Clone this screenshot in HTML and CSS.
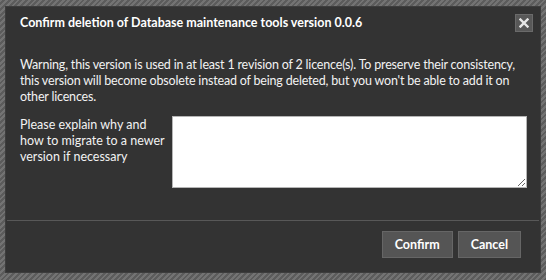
FILE: index.html
```html
<!DOCTYPE html>
<html lang="en">
<head>
    <meta charset="UTF-8">
    <title>Confirm deletion</title>
    <link rel="stylesheet" href="styles.css">
</head>
<body>
    <div class="dialog">
        <div class="dialog-header">
            <h1>Confirm deletion of Database maintenance tools version 0.0.6</h1>
            <button type="button" class="close-btn" aria-label="Close">
                <svg width="10" height="10" viewBox="0 0 10 10">
                    <path d="M1.5 1.5 L8.5 8.5 M8.5 1.5 L1.5 8.5" stroke="#e6e6e6" stroke-width="2.4" stroke-linecap="square"/>
                </svg>
            </button>
        </div>

        <div class="dialog-body">
            <p class="warning">Warning, this version is used in at least 1 revision of 2 licence(s). To preserve their consistency, this version will become obsolete instead of being deleted, but you won't be able to add it on other licences.</p>
            <div class="form-row">
                <label for="reason">Please explain why and how to migrate to a newer version if necessary</label>
                <textarea id="reason" name="reason" autofocus></textarea>
            </div>
        </div>

        <div class="dialog-footer">
            <button type="button" class="btn">Confirm</button>
            <button type="button" class="btn">Cancel</button>
        </div>
    </div>
</body>
</html>
```

FILE: styles.css
```css
* {
    box-sizing: border-box;
    font-family: 'Lato', sans-serif;
}

body {
    margin: 0;
    height: 280px;
    padding: 6px 5px 0 5px;
    background: repeating-linear-gradient(-45deg, #5c5c5c 0, #5c5c5c 2px, #737373 2px, #737373 4px);
    overflow: hidden;
}

.dialog {
    width: 536px;
    height: 267px;
    background: #333333;
    border: 1px solid #3d3d3d;
    display: flex;
    flex-direction: column;
    color: #f2f2f2;
}

.dialog-header {
    display: flex;
    align-items: center;
    justify-content: space-between;
    padding: 7px 7px 0 14px;
}

.dialog-header h1 {
    margin: 0;
    font-size: 12.5px;
    font-weight: 700;
    line-height: 18px;
    color: #ffffff;
}

.close-btn {
    width: 18px;
    height: 18px;
    padding: 0;
    background: #585858;
    border: 1px solid #6a6a6a;
    display: flex;
    align-items: center;
    justify-content: center;
}

.dialog-body {
    padding: 0 13px 0 14px;
}

.warning {
    margin: 25px 0 11px 0;
    font-size: 12.5px;
    line-height: 16px;
    letter-spacing: -0.18px;
}

.form-row {
    display: flex;
    gap: 4px;
}

.form-row label {
    width: 148px;
    flex-shrink: 0;
    padding-top: 1px;
    font-size: 12.5px;
    line-height: 16px;
}

.form-row textarea {
    flex: 1;
    height: 72px;
    background: #ffffff;
    border: 1px solid #b5b5b5;
    outline: none;
    resize: vertical;
}

.dialog-footer {
    margin: 32px 1px 0 1px;
    border-top: 1px solid #585858;
    display: flex;
    justify-content: flex-end;
    gap: 5px;
    padding: 10px 18px 0 0;
}

.btn {
    height: 27px;
    padding: 0 12px;
    background: #555555;
    border: 1px solid #666666;
    color: #ffffff;
    font-size: 12.5px;
    font-weight: 700;
}
```
